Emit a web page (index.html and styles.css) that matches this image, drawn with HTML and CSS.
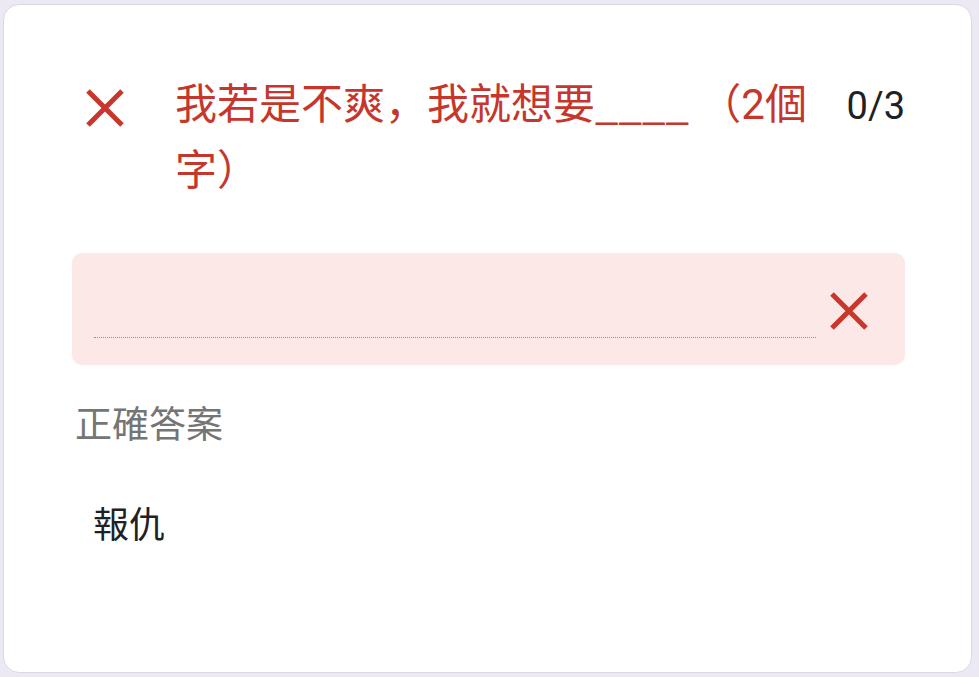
FILE: index.html
```html
<!DOCTYPE html>
<html lang="zh-Hans">
<head>
<meta charset="utf-8">
<link rel="stylesheet" href="styles.css">
</head>
<body>
<div class="card">
  <div class="question">
    <div class="q-icon">
      <svg width="40" height="40" viewBox="0 0 40 40"><path d="M3 3L37 37M37 3L3 37" stroke="#c9362b" stroke-width="5" stroke-linecap="butt"/></svg>
    </div>
    <div class="q-title">我若是不爽，我就想要<span class="blank">____</span> （2個字）</div>
    <div class="q-count">0/3</div>
  </div>
  <div class="answer-box">
    <div class="answer-line"></div>
    <div class="answer-icon">
      <svg width="40" height="40" viewBox="0 0 40 40"><path d="M3 3L37 37M37 3L3 37" stroke="#c9362b" stroke-width="5" stroke-linecap="butt"/></svg>
    </div>
  </div>
  <div class="correct-label">正確答案</div>
  <div class="correct-value">報仇</div>
</div>
</body>
</html>
```
FILE: styles.css
```css
html, body {
  margin: 0;
  padding: 0;
}
body {
  background: #ece9f5;
  width: 979px;
  height: 677px;
  padding: 4px 0 0 3px;
  box-sizing: border-box;
  font-family: Roboto, "Noto Sans CJK SC", sans-serif;
}
.card {
  width: 969px;
  height: 669px;
  box-sizing: border-box;
  background: #fff;
  border: 1px solid #d9d9e0;
  border-radius: 16px;
  padding: 67px 66px 0 68px;
}
.question {
  display: flex;
  align-items: baseline;
}
.q-icon {
  align-self: flex-start;
  width: 40px;
  height: 40px;
  margin: 16px 50px 0 13px;
  flex: none;
}
.q-icon svg, .answer-icon svg {
  display: block;
}
.q-title {
  flex: 1;
  color: #c5372c;
  font-size: 42px;
  line-height: 66px;
}
.blank {
  font-family: "Noto Sans CJK SC", sans-serif;
  line-height: 1;
}
.q-count {
  flex: none;
  margin-left: 28px;
  color: #202124;
  font-size: 38px;
  line-height: 66px;
}
.answer-box {
  margin-top: 49px;
  height: 112px;
  background: #fce8e6;
  border-radius: 10px;
  display: flex;
  align-items: flex-start;
  padding: 0 36px 0 22px;
}
.answer-line {
  flex: 1;
  margin-top: 84px;
  border-bottom: 1px dotted #8f8f8f;
}
.answer-icon {
  flex: none;
  width: 40px;
  height: 40px;
  margin: 38px 0 0 13px;
}
.correct-label {
  margin-top: 38px;
  margin-left: 3px;
  color: #757575;
  font-size: 37px;
  line-height: 46px;
}
.correct-value {
  margin-top: 54px;
  margin-left: 21px;
  color: #202124;
  font-size: 36px;
  line-height: 46px;
}
```
